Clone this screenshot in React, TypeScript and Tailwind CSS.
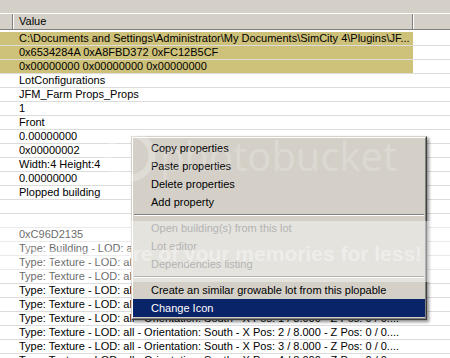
import React from "react";

type Row = { text: string; yellow?: boolean };

const tex = (n: number) =>
  `Type: Texture - LOD: all - Orientation: South - X Pos: ${n} / 8.000 - Z Pos: 0 / 0....`;

const rows: Row[] = [
  { text: "C:\\Documents and Settings\\Administrator\\My Documents\\SimCity 4\\Plugins\\JF...", yellow: true },
  { text: "0x6534284A 0xA8FBD372 0xFC12B5CF", yellow: true },
  { text: "0x00000000 0x00000000 0x00000000", yellow: true },
  { text: "LotConfigurations" },
  { text: "JFM_Farm Props_Props" },
  { text: "1" },
  { text: "Front" },
  { text: "0.00000000" },
  { text: "0x00000002" },
  { text: "Width:4 Height:4" },
  { text: "0.00000000" },
  { text: "Plopped building" },
  { text: "" },
  { text: "" },
  { text: "0xC96D2135" },
  { text: "Type: Building - LOD: all - Orientation: South - X Pos: 0 / 8.000 - Z Pos: 0 / 0...." },
  { text: "Type: Texture - LOD: all - Orientation: South - X Pos: 0 / 8.000 - Z Pos: 0 / 0...." },
  { text: "Type: Texture - LOD: all - Orientation: South - X Pos: 0 / 8.000 - Z Pos: 1 / 0...." },
  { text: "Type: Texture - LOD: all - Orientation: South - X Pos: 0 / 8.000 - Z Pos: 2 / 0...." },
  { text: tex(0) },
  { text: tex(1) },
  { text: tex(2) },
  { text: tex(3) },
  { text: tex(4) },
];

function MenuItem({
  label,
  disabled,
  active,
}: {
  label: string;
  disabled?: boolean;
  active?: boolean;
}) {
  return (
    <div
      className={
        "h-[18px] flex items-center pl-[18px] whitespace-nowrap leading-[13px] " +
        (active
          ? "bg-[#0a246a] text-white"
          : disabled
          ? "text-[#808080]"
          : "text-black")
      }
    >
      {label}
    </div>
  );
}

function Sep() {
  return (
    <div className="h-[8px] flex flex-col justify-center px-[1px]">
      <div className="h-[1px] bg-[#808080]" />
      <div className="h-[1px] bg-white" />
    </div>
  );
}

export default function App() {
  return (
    <div className="relative w-[450px] h-[358px] overflow-hidden bg-white font-['Liberation_Sans',Arial,sans-serif] text-[11px] text-black">
      {/* top band */}
      <div className="h-[13px] bg-[#d4d0c8]" />
      {/* header */}
      <div className="flex h-[17px] bg-[#d4d0c8] border-t border-t-white border-b border-b-[#808080]">
        <div className="w-[13px] border-r border-r-[#808080]" />
        <div className="w-[400px] border-l border-l-white border-r border-r-[#808080] pl-[5px] flex items-center leading-[13px]">
          Value
        </div>
        <div className="flex-1 border-l border-l-white" />
      </div>
      {/* rows */}
      <div className="flex flex-col">
        {rows.map((r, i) => (
          <div
            key={i}
            className={
              "flex border-b border-b-[#dcdcdc] " +
              (i === 0 ? "h-[16px] pt-[2px]" : "h-[14px]")
            }
          >
            <div
              className={
                "w-[413px] flex items-center pl-[19px] whitespace-nowrap overflow-hidden leading-[13px] " +
                (r.yellow ? "bg-[#cec17a]" : "")
              }
            >
              {r.text}
            </div>
            <div className="flex-1" />
          </div>
        ))}
      </div>

      {/* context menu */}
      <div className="absolute left-[131px] top-[136px] w-[296px] shadow-[2px_2px_3px_rgba(0,0,0,0.45)] bg-[#d4d0c8] border border-t-[#d4d0c8] border-l-[#d4d0c8] border-r-[#404040] border-b-[#404040]">
        <div className="border border-t-white border-l-white border-r-[#808080] border-b-[#808080] py-[1px]">
          <MenuItem label="Copy properties" />
          <MenuItem label="Paste properties" />
          <MenuItem label="Delete properties" />
          <MenuItem label="Add property" />
          <Sep />
          <MenuItem label="Open building(s) from this lot" disabled />
          <MenuItem label="Lot editor" disabled />
          <MenuItem label="Dependencies listing" disabled />
          <Sep />
          <MenuItem label="Create an similar growable lot from this plopable" />
          <MenuItem label="Change Icon" active />
        </div>
      </div>

      {/* watermark */}
      <div className="absolute left-0 right-0 top-[221px] h-[61px] bg-white/40 pointer-events-none" />
      <svg
        className="absolute left-[100px] top-[126px] pointer-events-none"
        width="60"
        height="60"
        viewBox="0 0 60 60"
      >
        <circle cx="30" cy="30" r="22" fill="none" stroke="rgba(255,255,255,0.25)" strokeWidth="7" />
      </svg>
      <div className="absolute left-[160px] top-[136px] text-[40px] leading-none text-white/20 font-['Open_Sans',sans-serif] pointer-events-none whitespace-nowrap">
        photobucket
      </div>
      <div className="absolute left-[23px] top-[243px] text-[21px] font-bold leading-none text-white/40 pointer-events-none whitespace-nowrap">
        Protect more of your memories for less!
      </div>
    </div>
  );
}
